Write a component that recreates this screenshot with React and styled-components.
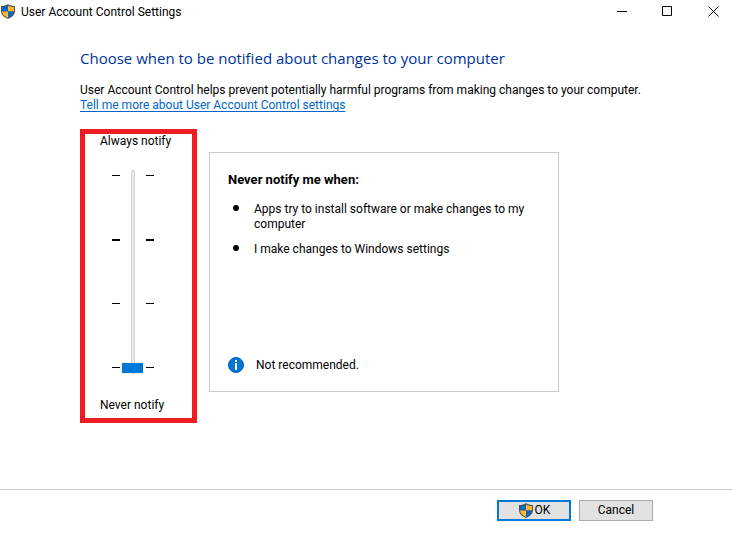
import React, { useState } from "react";
import styled, { createGlobalStyle } from "styled-components";

const GlobalStyle = createGlobalStyle`
  * { box-sizing: border-box; }
  body {
    margin: 0;
    background: #fff;
    color: #000;
    font-family: Roboto, "Noto Sans", sans-serif;
    font-size: 12px;
    line-height: 15px;
  }
`;

const Window = styled.div`
  display: flex;
  flex-direction: column;
  min-height: 100vh;
`;

const TitleBar = styled.header`
  display: flex;
  align-items: center;
  height: 23px;
  gap: 5px;
`;

const Title = styled.span`
  flex: 1;
  padding-top: 2px;
`;

const Caption = styled.div`
  display: flex;
  gap: 19px;
  padding-right: 5px;
`;

const CaptionButton = styled.button`
  display: grid;
  place-items: center;
  width: 27px;
  height: 23px;
  padding: 0;
  border: 0;
  background: none;
  color: #000;
`;

const Content = styled.main`
  flex: 1;
  padding: 24px 80px;
`;

const Heading = styled.h1`
  margin: 0 0 14px;
  color: #003399;
  font-family: "Open Sans", "Noto Sans", sans-serif;
  font-size: 15px;
  font-weight: 400;
  line-height: 22px;
`;

const Intro = styled.p`
  margin: 0;
`;

const HelpLink = styled.a`
  display: inline-block;
  color: #0066cc;
  text-underline-offset: 2px;
`;

const Columns = styled.div`
  display: flex;
  align-items: flex-start;
  gap: 12px;
  margin-top: 16px;
`;

const LevelBox = styled.section`
  display: flex;
  flex-direction: column;
  flex: none;
  width: 117px;
  padding-bottom: 5px;
  border: 5px solid #ed1c24;
`;

const LevelLabel = styled.label`
  padding-left: 15px;
`;

const Scale = styled.div`
  display: flex;
  gap: 2px;
  margin: 21px 0 24px 27px;
`;

const Ticks = styled.div`
  display: flex;
  flex-direction: column;
  justify-content: space-between;
  width: 8px;
  padding: 5px 0 6px;
`;

const Tick = styled.span`
  height: ${(p) => (p.$strong ? 2 : 1)}px;
  background: #000;
`;

const LevelSlider = styled.input`
  appearance: none;
  writing-mode: vertical-lr;
  direction: rtl;
  width: 22px;
  height: 204px;
  margin: 0;
  background: none;

  &::-webkit-slider-runnable-track {
    width: 4px;
    background: #e7eaea;
    border: 1px solid #d6d6d6;
  }

  &::-webkit-slider-thumb {
    appearance: none;
    width: 21px;
    height: 10px;
    margin-left: -10px;
    background: #0078d7;
  }
`;

const Panel = styled.section`
  display: flex;
  flex: 0 1 350px;
  flex-direction: column;
  justify-content: space-between;
  min-height: 240px;
  margin-top: 23px;
  padding: 19px 18px 18px;
  border: 1px solid #c8c8c8;
`;

const PanelTitle = styled.h2`
  margin: 0 0 15px;
  font-size: 13px;
  font-weight: 700;
  line-height: 15px;
`;

const Reasons = styled.ul`
  display: grid;
  gap: 10px;
  margin: 0;
  padding: 0;
  list-style: none;
`;

const Reason = styled.li`
  display: flex;
  gap: 15px;
  padding-left: 5px;

  &::before {
    content: "";
    flex: none;
    width: 6px;
    height: 6px;
    margin-top: 3px;
    border-radius: 50%;
    background: #000;
  }
`;

const Advice = styled.div`
  display: flex;
  align-items: center;
  gap: 12px;
`;

const Footer = styled.footer`
  display: flex;
  justify-content: flex-end;
  gap: 8px;
  padding: 10px 79px 23px;
  border-top: 1px solid #c8c8c8;
`;

const Button = styled.button`
  display: flex;
  align-items: center;
  justify-content: center;
  gap: 1px;
  width: 74px;
  height: 21px;
  padding: 0;
  border: ${(p) => (p.$primary ? "2px solid #0078d7" : "1px solid #adadad")};
  background: #e1e1e1;
  color: #000;
  font: inherit;
`;

function Shield() {
  return (
    <svg width="16" height="15" viewBox="0 0 16 15" aria-hidden="true">
      <path
        fill="#505458"
        d="M8 0C6 1.4 3.4 2 1 2V7C1 10.8 4 13.4 8 15C12 13.4 15 10.8 15 7V2C12.6 2 10 1.4 8 0Z"
      />
      <path fill="#0b67c6" d="M8 1.4C6.2 2.5 4 3 2 3V7.5H8Z" />
      <path fill="#fdb82c" d="M8 1.4C9.8 2.5 12 3 14 3V7.5H8Z" />
      <path fill="#fdb82c" d="M2 7.5C2.2 10.4 4.7 12.5 8 13.9V7.5Z" />
      <path fill="#0b67c6" d="M14 7.5C13.8 10.4 11.3 12.5 8 13.9V7.5Z" />
    </svg>
  );
}

function InfoIcon() {
  return (
    <svg width="16" height="16" viewBox="0 0 16 16" aria-hidden="true">
      <circle cx="8" cy="8" r="7.5" fill="#0078d7" stroke="#0a5cab" />
      <rect x="7" y="3" width="2" height="2" fill="#fff" />
      <rect x="7" y="6" width="2" height="7" fill="#fff" />
    </svg>
  );
}

function CaptionIcon({ d }) {
  return (
    <svg width="11" height="11" viewBox="0 0 11 11" aria-hidden="true">
      <path d={d} fill="none" stroke="currentColor" />
    </svg>
  );
}

function TickColumn() {
  return (
    <Ticks aria-hidden="true">
      <Tick />
      <Tick $strong />
      <Tick />
      <Tick />
    </Ticks>
  );
}

export default function App() {
  const [level, setLevel] = useState(0);

  return (
    <Window>
      <GlobalStyle />
      <TitleBar>
        <Shield />
        <Title>User Account Control Settings</Title>
        <Caption>
          <CaptionButton aria-label="Minimize">
            <CaptionIcon d="M1 5.5H11" />
          </CaptionButton>
          <CaptionButton aria-label="Maximize">
            <CaptionIcon d="M0.5 0.5H9.5V9.5H0.5Z" />
          </CaptionButton>
          <CaptionButton aria-label="Close">
            <CaptionIcon d="M0.5 0.5L10.5 10.5M10.5 0.5L0.5 10.5" />
          </CaptionButton>
        </Caption>
      </TitleBar>

      <Content>
        <Heading>Choose when to be notified about changes to your computer</Heading>
        <Intro>
          User Account Control helps prevent potentially harmful programs from making changes to your computer.
        </Intro>
        <HelpLink href="#help">Tell me more about User Account Control settings</HelpLink>

        <Columns>
          <LevelBox>
            <LevelLabel htmlFor="level">Always notify</LevelLabel>
            <Scale>
              <TickColumn />
              <LevelSlider
                id="level"
                type="range"
                min="0"
                max="3"
                step="1"
                value={level}
                onChange={(e) => setLevel(Number(e.target.value))}
              />
              <TickColumn />
            </Scale>
            <LevelLabel htmlFor="level">Never notify</LevelLabel>
          </LevelBox>

          <Panel>
            <div>
              <PanelTitle>Never notify me when:</PanelTitle>
              <Reasons>
                <Reason>Apps try to install software or make changes to my computer</Reason>
                <Reason>I make changes to Windows settings</Reason>
              </Reasons>
            </div>
            <Advice>
              <InfoIcon />
              Not recommended.
            </Advice>
          </Panel>
        </Columns>
      </Content>

      <Footer>
        <Button $primary>
          <Shield />
          OK
        </Button>
        <Button>Cancel</Button>
      </Footer>
    </Window>
  );
}
